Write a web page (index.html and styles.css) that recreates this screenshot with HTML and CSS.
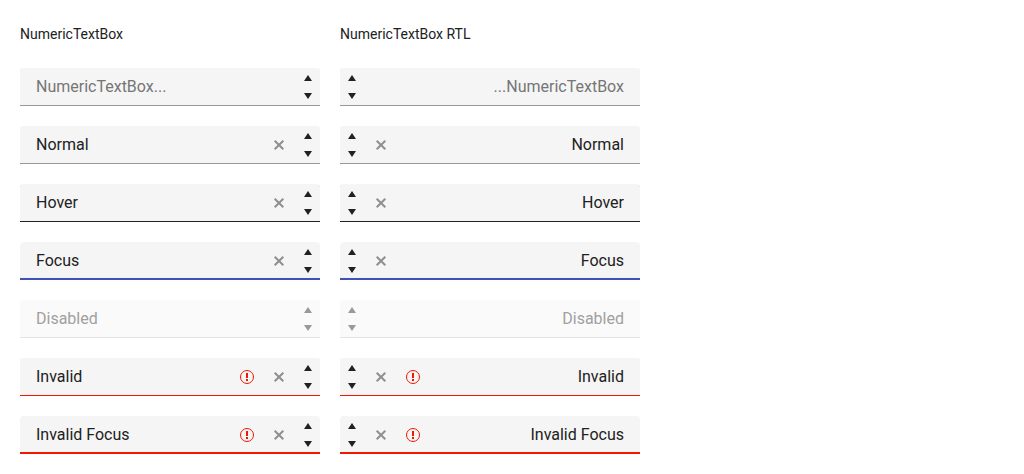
FILE: index.html
```
<!DOCTYPE html>
<html lang="en">
<head>
<meta charset="utf-8">
<title>NumericTextBox</title>
<link rel="stylesheet" href="styles.css">
</head>
<body>
<svg class="sprite" aria-hidden="true">
  <symbol id="up" viewBox="0 0 8 6"><path d="M4 0 8 6H0z"/></symbol>
  <symbol id="down" viewBox="0 0 8 6"><path d="M4 6 0 0h8z"/></symbol>
  <symbol id="clear" viewBox="0 0 16 16"><path d="M3.7 3.7l8.6 8.6M12.3 3.7l-8.6 8.6" fill="none" stroke="currentColor" stroke-width="2"/></symbol>
  <symbol id="error" viewBox="0 0 16 16"><circle cx="8" cy="8" r="6.5" fill="none" stroke="currentColor"/><path d="M7 4h2v5H7zM7 10h2v2H7z"/></symbol>
</svg>
<main class="grid">
  <section class="column">
    <h2 class="title">NumericTextBox</h2>
    <div class="numeric">
      <input class="field" type="text" inputmode="decimal" aria-label="Empty" placeholder="NumericTextBox...">
      <span class="spinner"><button class="step" type="button" aria-label="Increase"><svg class="arrow"><use href="#up"/></svg></button><button class="step" type="button" aria-label="Decrease"><svg class="arrow"><use href="#down"/></svg></button></span>
    </div>
    <div class="numeric">
      <input class="field" type="text" aria-label="Normal" value="Normal">
      <button class="clear" type="button" aria-label="Clear"><svg class="icon"><use href="#clear"/></svg></button>
      <span class="spinner"><button class="step" type="button" aria-label="Increase"><svg class="arrow"><use href="#up"/></svg></button><button class="step" type="button" aria-label="Decrease"><svg class="arrow"><use href="#down"/></svg></button></span>
    </div>
    <div class="numeric hover">
      <input class="field" type="text" aria-label="Hover" value="Hover">
      <button class="clear" type="button" aria-label="Clear"><svg class="icon"><use href="#clear"/></svg></button>
      <span class="spinner"><button class="step" type="button" aria-label="Increase"><svg class="arrow"><use href="#up"/></svg></button><button class="step" type="button" aria-label="Decrease"><svg class="arrow"><use href="#down"/></svg></button></span>
    </div>
    <div class="numeric focus">
      <input class="field" type="text" aria-label="Focus" value="Focus">
      <button class="clear" type="button" aria-label="Clear"><svg class="icon"><use href="#clear"/></svg></button>
      <span class="spinner"><button class="step" type="button" aria-label="Increase"><svg class="arrow"><use href="#up"/></svg></button><button class="step" type="button" aria-label="Decrease"><svg class="arrow"><use href="#down"/></svg></button></span>
    </div>
    <div class="numeric disabled">
      <input class="field" type="text" aria-label="Disabled" value="Disabled" disabled>
      <span class="spinner"><button class="step" type="button" aria-label="Increase" disabled><svg class="arrow"><use href="#up"/></svg></button><button class="step" type="button" aria-label="Decrease" disabled><svg class="arrow"><use href="#down"/></svg></button></span>
    </div>
    <div class="numeric invalid">
      <input class="field" type="text" aria-label="Invalid" value="Invalid" aria-invalid="true">
      <span class="validation"><svg class="icon"><use href="#error"/></svg></span>
      <button class="clear" type="button" aria-label="Clear"><svg class="icon"><use href="#clear"/></svg></button>
      <span class="spinner"><button class="step" type="button" aria-label="Increase"><svg class="arrow"><use href="#up"/></svg></button><button class="step" type="button" aria-label="Decrease"><svg class="arrow"><use href="#down"/></svg></button></span>
    </div>
    <div class="numeric invalid-focus">
      <input class="field" type="text" aria-label="Invalid Focus" value="Invalid Focus" aria-invalid="true">
      <span class="validation"><svg class="icon"><use href="#error"/></svg></span>
      <button class="clear" type="button" aria-label="Clear"><svg class="icon"><use href="#clear"/></svg></button>
      <span class="spinner"><button class="step" type="button" aria-label="Increase"><svg class="arrow"><use href="#up"/></svg></button><button class="step" type="button" aria-label="Decrease"><svg class="arrow"><use href="#down"/></svg></button></span>
    </div>
  </section>
  <section class="column">
    <h2 class="title">NumericTextBox RTL</h2>
    <div class="numeric" dir="rtl">
      <input class="field" type="text" inputmode="decimal" aria-label="Empty" placeholder="NumericTextBox...">
      <span class="spinner"><button class="step" type="button" aria-label="Increase"><svg class="arrow"><use href="#up"/></svg></button><button class="step" type="button" aria-label="Decrease"><svg class="arrow"><use href="#down"/></svg></button></span>
    </div>
    <div class="numeric" dir="rtl">
      <input class="field" type="text" aria-label="Normal" value="Normal">
      <button class="clear" type="button" aria-label="Clear"><svg class="icon"><use href="#clear"/></svg></button>
      <span class="spinner"><button class="step" type="button" aria-label="Increase"><svg class="arrow"><use href="#up"/></svg></button><button class="step" type="button" aria-label="Decrease"><svg class="arrow"><use href="#down"/></svg></button></span>
    </div>
    <div class="numeric hover" dir="rtl">
      <input class="field" type="text" aria-label="Hover" value="Hover">
      <button class="clear" type="button" aria-label="Clear"><svg class="icon"><use href="#clear"/></svg></button>
      <span class="spinner"><button class="step" type="button" aria-label="Increase"><svg class="arrow"><use href="#up"/></svg></button><button class="step" type="button" aria-label="Decrease"><svg class="arrow"><use href="#down"/></svg></button></span>
    </div>
    <div class="numeric focus" dir="rtl">
      <input class="field" type="text" aria-label="Focus" value="Focus">
      <button class="clear" type="button" aria-label="Clear"><svg class="icon"><use href="#clear"/></svg></button>
      <span class="spinner"><button class="step" type="button" aria-label="Increase"><svg class="arrow"><use href="#up"/></svg></button><button class="step" type="button" aria-label="Decrease"><svg class="arrow"><use href="#down"/></svg></button></span>
    </div>
    <div class="numeric disabled" dir="rtl">
      <input class="field" type="text" aria-label="Disabled" value="Disabled" disabled>
      <span class="spinner"><button class="step" type="button" aria-label="Increase" disabled><svg class="arrow"><use href="#up"/></svg></button><button class="step" type="button" aria-label="Decrease" disabled><svg class="arrow"><use href="#down"/></svg></button></span>
    </div>
    <div class="numeric invalid" dir="rtl">
      <input class="field" type="text" aria-label="Invalid" value="Invalid" aria-invalid="true">
      <span class="validation"><svg class="icon"><use href="#error"/></svg></span>
      <button class="clear" type="button" aria-label="Clear"><svg class="icon"><use href="#clear"/></svg></button>
      <span class="spinner"><button class="step" type="button" aria-label="Increase"><svg class="arrow"><use href="#up"/></svg></button><button class="step" type="button" aria-label="Decrease"><svg class="arrow"><use href="#down"/></svg></button></span>
    </div>
    <div class="numeric invalid-focus" dir="rtl">
      <input class="field" type="text" aria-label="Invalid Focus" value="Invalid Focus" aria-invalid="true">
      <span class="validation"><svg class="icon"><use href="#error"/></svg></span>
      <button class="clear" type="button" aria-label="Clear"><svg class="icon"><use href="#clear"/></svg></button>
      <span class="spinner"><button class="step" type="button" aria-label="Increase"><svg class="arrow"><use href="#up"/></svg></button><button class="step" type="button" aria-label="Decrease"><svg class="arrow"><use href="#down"/></svg></button></span>
    </div>
  </section>
</main>
</body>
</html>
```
FILE: styles.css
```
* {
  box-sizing: border-box;
}

body {
  margin: 0;
  padding: 20px;
  background: #fff;
  color: #212121;
  font-family: Roboto, sans-serif;
  font-size: 14px;
  line-height: 28px;
}

.sprite {
  display: none;
}

.grid {
  display: grid;
  grid-template-columns: repeat(2, minmax(0, 300px));
  gap: 20px;
}

.column {
  display: flex;
  flex-direction: column;
  gap: 20px;
}

.title {
  margin: 0;
  font-size: 14px;
  font-weight: 400;
}

.numeric {
  display: flex;
  padding: 1px 0;
  border-radius: 4px 4px 0 0;
  background: #f5f5f5;
  box-shadow: inset 0 -1px #999;
}

.hover {
  box-shadow: inset 0 -1px #212121;
}

.focus {
  box-shadow: inset 0 -2px #3f51b5;
}

.disabled {
  background: #fafafa;
  box-shadow: inset 0 -1px #e5e5e5;
}

.invalid {
  box-shadow: inset 0 -1px #f31700;
}

.invalid-focus {
  box-shadow: inset 0 -2px #f31700;
}

.field {
  flex: 1;
  min-width: 0;
  margin: 0;
  padding: 6px 16px;
  border: 0;
  outline: 0;
  background: none;
  color: inherit;
  font-family: inherit;
  font-size: 16px;
  line-height: 24px;
}

.field::placeholder {
  color: #757575;
  opacity: 1;
}

.disabled .field {
  color: #a0a0a0;
}

.clear,
.validation,
.step {
  display: flex;
  align-items: center;
  justify-content: center;
  padding: 0;
  border: 0;
  background: none;
}

.clear,
.validation {
  width: 32px;
  color: #8f8f8f;
}

.validation {
  color: #f31700;
}

.spinner {
  display: flex;
  flex-direction: column;
  width: 24px;
  margin-inline-start: 1px;
}

.step {
  flex: 1;
  color: #212121;
}

.disabled .step {
  color: #999;
}

.icon {
  width: 16px;
  height: 16px;
  fill: currentColor;
}

.arrow {
  width: 8px;
  height: 6px;
  fill: currentColor;
}
```
